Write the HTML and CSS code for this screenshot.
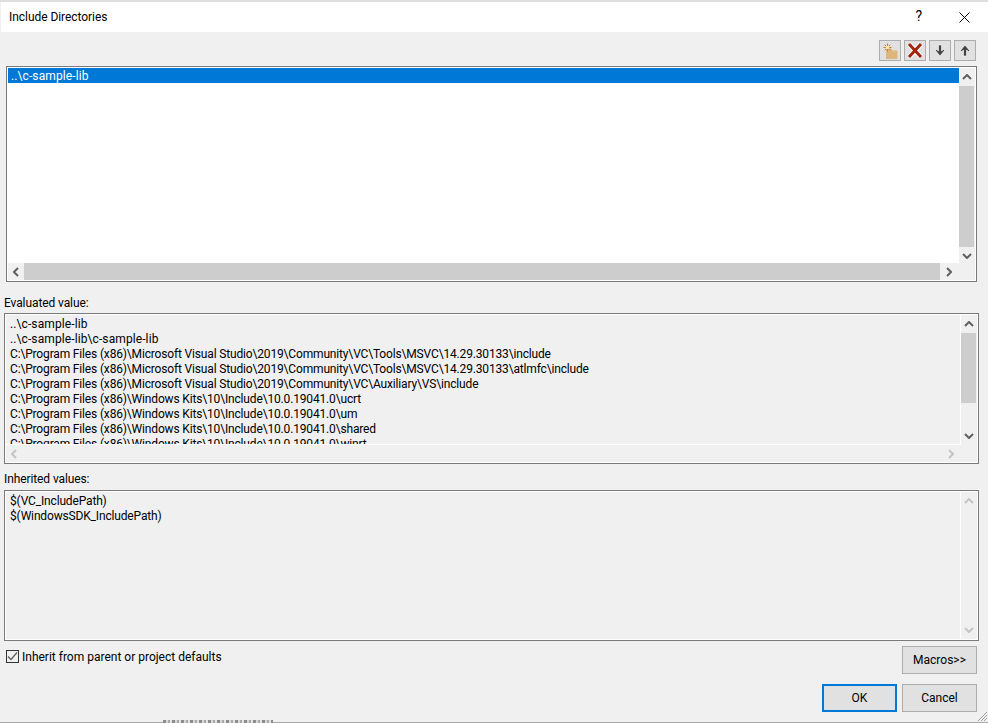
FILE: index.html
```html
<!DOCTYPE html>
<html lang="en">
<head>
  <meta charset="UTF-8">
  <title>Include Directories</title>
  <link rel="stylesheet" href="styles.css">
</head>
<body>
  <div class="dialog">
    <div class="titlebar">
      <span class="title">Include Directories</span>
      <span class="help">?</span>
      <svg class="close" width="11" height="11" viewBox="0 0 11 11"><path d="M.5.5l10 10M10.500.5l-10 10" stroke="#000" fill="none"/></svg>
    </div>

    <div class="content">
      <div class="toolbar">
        <button class="tool">
          <svg width="20" height="19" viewBox="0 0 20 19">
            <path d="M6 7.500h5l1.500 2h5V18H6z" fill="#dcb67a"/>
            <path d="M7.500 2.500v8M3.500 6.500h8M4.700 3.700l5.600 5.600M10.300 3.700L4.700 9.300" stroke="#c27d1a" stroke-width="1"/>
            <circle cx="7.500" cy="6.500" r="1.800" fill="#f6e6c0"/>
          </svg>
        </button>
        <button class="tool">
          <svg width="20" height="19" viewBox="0 0 20 19">
            <path d="M4 3l12 13M16 3L4 16" stroke="#fff" stroke-width="5"/>
            <path d="M4 3l12 13M16 3L4 16" stroke="#a1260d" stroke-width="3"/>
          </svg>
        </button>
        <button class="tool">
          <svg width="20" height="19" viewBox="0 0 20 19">
            <path d="M8.500 4h3v6l2-1.500 1 1L10 15 5.500 9.500l1-1 2 1.500z" fill="#424242" stroke="#fff" stroke-width=".6"/>
          </svg>
        </button>
        <button class="tool">
          <svg width="20" height="19" viewBox="0 0 20 19">
            <path d="M8.500 15h3V9l2 1.500 1-1L10 4 5.500 9.500l1 1 2-1.500z" fill="#424242" stroke="#fff" stroke-width=".6"/>
          </svg>
        </button>
      </div>

      <div class="list list-edit">
        <div class="list-body">
          <div class="row selected">..\c-sample-lib</div>
        </div>
        <div class="vscroll">
          <svg class="arrow" width="10" height="6" viewBox="0 0 10 6"><path d="M1 5l4-4 4 4" fill="none" stroke="#606060" stroke-width="2"/></svg>
          <div class="track"><div class="thumb thumb-edit"></div></div>
          <svg class="arrow" width="10" height="6" viewBox="0 0 10 6"><path d="M1 1l4 4 4-4" fill="none" stroke="#606060" stroke-width="2"/></svg>
        </div>
        <div class="hscroll">
          <svg class="arrow" width="6" height="10" viewBox="0 0 6 10"><path d="M5 1L1 5l4 4" fill="none" stroke="#606060" stroke-width="2"/></svg>
          <div class="hthumb"></div>
          <svg class="arrow" width="6" height="10" viewBox="0 0 6 10"><path d="M1 1l4 4-4 4" fill="none" stroke="#606060" stroke-width="2"/></svg>
        </div>
        <div class="corner"></div>
      </div>

      <div class="label label-eval">Evaluated value:</div>
      <div class="list list-eval">
        <div class="list-body">
          <div class="row short">..\c-sample-lib</div>
          <div class="row short">..\c-sample-lib\c-sample-lib</div>
          <div class="row path">C:\Program Files (x86)\Microsoft Visual Studio\2019\Community\VC\Tools\MSVC\14.29.30133\include</div>
          <div class="row path">C:\Program Files (x86)\Microsoft Visual Studio\2019\Community\VC\Tools\MSVC\14.29.30133\atlmfc\include</div>
          <div class="row path">C:\Program Files (x86)\Microsoft Visual Studio\2019\Community\VC\Auxiliary\VS\include</div>
          <div class="row path">C:\Program Files (x86)\Windows Kits\10\Include\10.0.19041.0\ucrt</div>
          <div class="row path">C:\Program Files (x86)\Windows Kits\10\Include\10.0.19041.0\um</div>
          <div class="row path">C:\Program Files (x86)\Windows Kits\10\Include\10.0.19041.0\shared</div>
          <div class="row path">C:\Program Files (x86)\Windows Kits\10\Include\10.0.19041.0\winrt</div>
        </div>
        <div class="vscroll">
          <svg class="arrow" width="10" height="6" viewBox="0 0 10 6"><path d="M1 5l4-4 4 4" fill="none" stroke="#606060" stroke-width="2"/></svg>
          <div class="track"><div class="thumb thumb-eval"></div></div>
          <svg class="arrow" width="10" height="6" viewBox="0 0 10 6"><path d="M1 1l4 4 4-4" fill="none" stroke="#606060" stroke-width="2"/></svg>
        </div>
        <div class="hscroll">
          <svg class="arrow" width="6" height="10" viewBox="0 0 6 10"><path d="M5 1L1 5l4 4" fill="none" stroke="#c4c4c4" stroke-width="2"/></svg>
          <div class="hthumb off"></div>
          <svg class="arrow" width="6" height="10" viewBox="0 0 6 10"><path d="M1 1l4 4-4 4" fill="none" stroke="#c4c4c4" stroke-width="2"/></svg>
        </div>
        <div class="corner"></div>
      </div>

      <div class="label label-inherit">Inherited values:</div>
      <div class="list list-inherit">
        <div class="list-body">
          <div class="row path">$(VC_IncludePath)</div>
          <div class="row path">$(WindowsSDK_IncludePath)</div>
        </div>
        <div class="vscroll">
          <svg class="arrow" width="10" height="6" viewBox="0 0 10 6"><path d="M1 5l4-4 4 4" fill="none" stroke="#c4c4c4" stroke-width="2"/></svg>
          <div class="track"></div>
          <svg class="arrow" width="10" height="6" viewBox="0 0 10 6"><path d="M1 1l4 4 4-4" fill="none" stroke="#c4c4c4" stroke-width="2"/></svg>
        </div>
      </div>

      <div class="options">
        <label class="check">
          <span class="box">
            <svg width="11" height="11" viewBox="0 0 11 11"><path d="M1 5.500l3 3 6-7" fill="none" stroke="#606060" stroke-width="1.300"/></svg>
          </span>
          <span>Inherit from parent or project defaults</span>
        </label>
        <button class="btn">Macros&gt;&gt;</button>
      </div>

      <div class="actions">
        <button class="btn btn-default">OK</button>
        <button class="btn">Cancel</button>
      </div>
    </div>
    <div class="behind"></div>
    <svg class="grip" width="11" height="11" viewBox="0 0 11 11"><path d="M10 1L1 10M10 4l-6 6M10 7l-3 3" stroke="#a0a0a0" fill="none"/></svg>
  </div>
</body>
</html>
```

FILE: styles.css
```css
* {
  box-sizing: border-box;
}
html, body {
  margin: 0;
  height: 100%;
}
body {
  font-family: Roboto, "Open Sans", Arial, sans-serif;
  font-size: 12px;
  color: #000;
  background-color: #f0f0f0;
  overflow: hidden;
}
.dialog {
  position: relative;
  width: 988px;
  height: 723px;
  border-top: 2px solid #dedede;
  border-bottom: 1px solid #a8a8a8;
  display: flex;
  flex-direction: column;
}
.titlebar {
  height: 30px;
  margin-left: 1px;
  background-color: #fff;
  display: flex;
  align-items: center;
  padding-left: 8px;
  flex-shrink: 0;
}
.title {
  flex: 1;
  letter-spacing: -0.05px;
}
.help {
  font-size: 14px;
  margin: 0 37px 2px 0;
}
.close {
  margin-right: 18px;
}
.content {
  flex: 1;
  display: flex;
  flex-direction: column;
  padding: 8px 9px 0 4px;
}
.toolbar {
  display: flex;
  justify-content: flex-end;
  gap: 3px;
  height: 26px;
  padding-right: 3px;
}
.tool {
  width: 22px;
  height: 21px;
  padding: 0;
  border: 1px solid #adadad;
  background-color: #e1e1e1;
  display: flex;
  align-items: center;
  justify-content: center;
}
.list {
  display: grid;
  grid-template-columns: 1fr 16px;
  grid-template-rows: 1fr 17px;
  border: 1px solid #7a7a7a;
  outline: 1px solid #fff;
  outline-offset: -2px;
  padding: 1px;
}
.list-edit {
  height: 216px;
  margin: 0 2px;
  background-color: #fff;
}
.list-eval {
  height: 151px;
}
.list-inherit {
  height: 151px;
  grid-template-rows: 1fr;
}
.list-body {
  overflow: hidden;
  min-width: 0;
}
.list-eval .list-body {
  padding: 2px 0 0 4px;
  border-right: 1px solid #fff;
  border-bottom: 1px solid #fff;
}
.list-inherit .list-body {
  padding: 2px 0 0 4px;
  border-right: 1px solid #fff;
}
.row {
  height: 15px;
  line-height: 15px;
  white-space: nowrap;
}
.row.short {
  letter-spacing: 0.1px;
}
.row.path {
  letter-spacing: -0.16px;
}
.selected {
  background-color: #0078d7;
  color: #fff;
  padding-left: 3px;
  line-height: 16px;
  letter-spacing: 0.1px;
}
.vscroll {
  display: flex;
  flex-direction: column;
  align-items: center;
  min-height: 0;
  background-color: #f0f0f0;
}
.vscroll .arrow {
  margin: 6px 0;
  flex-shrink: 0;
}
.track {
  flex: 1;
  width: 100%;
}
.thumb {
  background-color: #cdcdcd;
  width: 15px;
}
.thumb-edit {
  height: 161px;
}
.thumb-eval {
  height: 70px;
}
.hscroll {
  display: flex;
  align-items: center;
  background-color: #f0f0f0;
}
.hscroll .arrow {
  margin: 0 5px;
  flex-shrink: 0;
}
.hscroll .arrow:last-child {
  margin: 0 7px 0 6px;
}
.hthumb {
  flex: 1;
  height: 100%;
  background-color: #cdcdcd;
}
.hthumb.off {
  background-color: transparent;
}
.corner {
  background-color: #f0f0f0;
}
.label {
  height: 15px;
  line-height: 15px;
  letter-spacing: -0.1px;
}
.label-eval {
  margin-top: 14px;
  margin-bottom: 2px;
}
.label-inherit {
  margin-top: 8px;
  margin-bottom: 3px;
}
.options {
  display: flex;
  justify-content: space-between;
  align-items: flex-start;
  padding: 5px 2px 0 0;
}
.check {
  display: flex;
  align-items: flex-start;
  gap: 3px;
  margin: 4px 0 0 2px;
  line-height: 15px;
}
.box {
  width: 13px;
  height: 13px;
  border: 1px solid #333;
  background-color: #f0f0f0;
  display: flex;
  align-items: center;
  justify-content: center;
}
.btn {
  width: 75px;
  height: 28px;
  padding: 0;
  font-family: inherit;
  font-size: inherit;
  color: #000;
  background-color: #e1e1e1;
  border: 1px solid #adadad;
}
.btn-default {
  border: 2px solid #0078d7;
}
.actions {
  display: flex;
  justify-content: flex-end;
  gap: 5px;
  margin-top: 10px;
  padding-right: 2px;
}
/* bit of the window behind showing under the dialog edge */
.behind {
  position: absolute;
  left: 163px;
  bottom: -1px;
  width: 110px;
  height: 3px;
  background: repeating-linear-gradient(90deg, #8c8c8c 0 3px, #d8d8d8 3px 5px, #a8a8a8 5px 7px, #e4e4e4 7px 9px);
}
.grip {
  position: absolute;
  right: 0;
  bottom: 0;
}
```
